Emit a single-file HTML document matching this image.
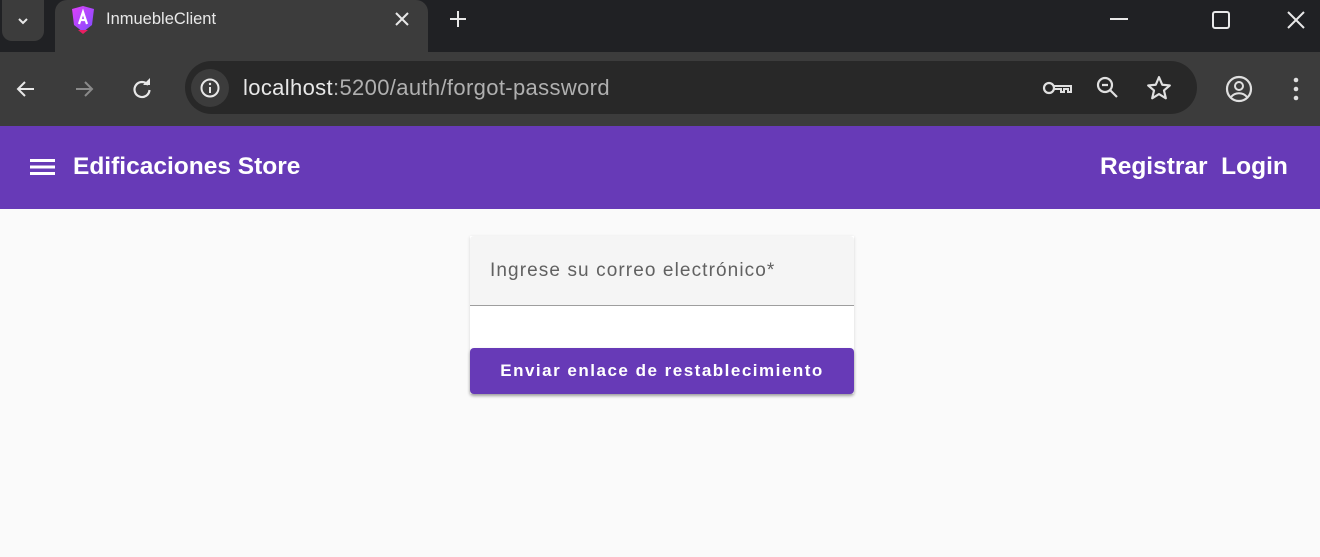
<!DOCTYPE html>
<html><head><meta charset="utf-8"><style>
*{margin:0;padding:0;box-sizing:border-box}
body{width:1320px;height:557px;background:#fafafa;font-family:"Liberation Sans",sans-serif;position:relative;overflow:hidden}
.abs{position:absolute}
svg{position:absolute}
</style></head><body>
<div class="abs" style="left:0;top:0;width:1320px;height:52px;background:#202124"></div>
<div class="abs" style="left:2px;top:0;width:42px;height:41px;background:#3c3c3c;border-radius:0 0 10px 10px"></div>
<svg style="left:14px;top:12px" width="18" height="18" viewBox="0 0 18 18"><path d="M5 7l4 4 4-4" stroke="#e8e8e8" stroke-width="2" fill="none"/></svg>
<div class="abs" style="left:55px;top:0;width:373px;height:52px;background:#3c3c3c;border-radius:12px 12px 0 0"></div>
<svg style="left:70px;top:6px" width="26" height="28" viewBox="0 0 26 28"><defs><linearGradient id="g" x1="0" y1="0" x2="1" y2="1"><stop offset="0" stop-color="#e040fb"/><stop offset="1" stop-color="#7c4dff"/></linearGradient></defs><path d="M2 3L13 0l11 3-2 16-9 7-9-7z" fill="url(#g)"/><path d="M9 18l4-12 4 12M10.5 14h5" stroke="#fff" stroke-width="2.2" fill="none"/><path d="M8 24h10l-5 4z" fill="#e91e63"/></svg>
<div class="abs" style="left:106px;top:10px;color:#e8e8e8;font-size:16.5px">InmuebleClient</div>
<svg style="left:394px;top:11px" width="16" height="16" viewBox="0 0 16 16"><path d="M2 2l12 12M14 2L2 14" stroke="#e8e8e8" stroke-width="2"/></svg>
<svg style="left:449px;top:10px" width="18" height="18" viewBox="0 0 18 18"><path d="M9 1v16M1 9h16" stroke="#e8e8e8" stroke-width="2"/></svg>
<svg style="left:1110px;top:18px" width="20" height="4"><rect width="18" height="2" fill="#e8e8e8"/></svg>
<svg style="left:1212px;top:11px" width="18" height="18"><rect x="1" y="1" width="16" height="16" rx="2" stroke="#e8e8e8" stroke-width="2" fill="none"/></svg>
<svg style="left:1286px;top:10px" width="20" height="20"><path d="M2 2l16 16M18 2L2 18" stroke="#e8e8e8" stroke-width="2"/></svg>
<div class="abs" style="left:0;top:52px;width:1320px;height:74px;background:#3c3c3c"></div>
<svg style="left:14px;top:78px" width="24" height="22" viewBox="0 0 24 22"><path d="M20 11H5M11 4l-7 7 7 7" stroke="#e8e8e8" stroke-width="2" fill="none"/></svg>
<svg style="left:72px;top:78px" width="24" height="22" viewBox="0 0 24 22"><path d="M4 11h15M13 4l7 7-7 7" stroke="#8a8a8a" stroke-width="2" fill="none"/></svg>
<svg style="left:131px;top:78px" width="22" height="22" viewBox="0 0 22 22"><path d="M17 7A7.5 7.5 0 1 0 18.5 12" stroke="#e8e8e8" stroke-width="2.2" fill="none"/><path d="M12 7h7V0z" fill="#e8e8e8"/></svg>
<div class="abs" style="left:185px;top:61px;width:1012px;height:53px;background:#282828;border-radius:27px"></div>
<div class="abs" style="left:191px;top:69px;width:38px;height:38px;background:#3c3c3c;border-radius:19px"></div>
<svg style="left:200px;top:78px" width="20" height="20" viewBox="0 0 20 20"><circle cx="10" cy="10" r="8.5" stroke="#e8e8e8" stroke-width="2" fill="none"/><path d="M10 9v6" stroke="#e8e8e8" stroke-width="2"/><circle cx="10" cy="6" r="1.2" fill="#e8e8e8"/></svg>
<div class="abs" style="left:243px;top:75px;font-size:22px;letter-spacing:0.35px;color:#e8e8e8">localhost<span style="color:#b0b0b0">:5200/auth/forgot-password</span></div>
<svg style="left:1042px;top:78px" width="32" height="20" viewBox="0 0 32 20"><circle cx="7" cy="10" r="5" stroke="#e0e0e0" stroke-width="2.2" fill="none"/><path d="M12 8h17v6h-3v-3h-4v3h-3v-3h-7" stroke="#e0e0e0" stroke-width="2" fill="none"/></svg>
<svg style="left:1095px;top:75px" width="26" height="26" viewBox="0 0 26 26"><circle cx="10" cy="10" r="7" stroke="#e0e0e0" stroke-width="2.2" fill="none"/><path d="M15 15l7 7M7 10h6" stroke="#e0e0e0" stroke-width="2.2"/></svg>
<svg style="left:1146px;top:75px" width="26" height="26" viewBox="0 0 24 24"><path d="M12 2l3 7 7 .6-5.4 4.7 1.7 7.2L12 17.6 5.7 21.5l1.7-7.2L2 9.6 9 9z" stroke="#e0e0e0" stroke-width="2" fill="none" stroke-linejoin="round"/></svg>
<svg style="left:1225px;top:75px" width="28" height="28" viewBox="0 0 28 28"><circle cx="14" cy="14" r="12" stroke="#e0e0e0" stroke-width="2.2" fill="none"/><circle cx="14" cy="11" r="4" stroke="#e0e0e0" stroke-width="2" fill="none"/><path d="M6 22c4-5 12-5 16 0" stroke="#e0e0e0" stroke-width="2" fill="none"/></svg>
<svg style="left:1290px;top:76px" width="12" height="26"><circle cx="6" cy="4" r="2.3" fill="#e0e0e0"/><circle cx="6" cy="13" r="2.3" fill="#e0e0e0"/><circle cx="6" cy="22" r="2.3" fill="#e0e0e0"/></svg>
<div class="abs" style="left:0;top:126px;width:1320px;height:83px;background:#673ab7"></div>
<svg style="left:30px;top:158px" width="26" height="18"><rect y="1" width="25" height="3" fill="#fff"/><rect y="7.5" width="25" height="3" fill="#fff"/><rect y="14" width="25" height="3" fill="#fff"/></svg>
<div class="abs" style="left:73px;top:153px;color:#fff;font-size:24.5px;font-weight:bold;letter-spacing:0px">Edificaciones Store</div>
<div class="abs" style="left:1100px;top:153px;color:#fff;font-size:24.5px;font-weight:bold;letter-spacing:0px">Registrar&nbsp; Login</div>
<div class="abs" style="left:470px;top:236px;width:384px;height:158px;background:#fff;box-shadow:0 1px 3px rgba(0,0,0,.15)"></div>
<div class="abs" style="left:470px;top:236px;width:384px;height:70px;background:#f5f5f5;border-bottom:1px solid #9e9e9e;border-radius:4px 4px 0 0"></div>
<div class="abs" style="left:490px;top:260px;color:#616161;font-size:19px;letter-spacing:1.1px">Ingrese su correo electrónico*</div>
<div class="abs" style="left:470px;top:348px;width:384px;height:46px;background:#673ab7;border-radius:4px;box-shadow:0 2px 3px rgba(0,0,0,.3);color:#fff;font-weight:bold;font-size:17px;letter-spacing:1.5px;text-align:center;line-height:45px">Enviar enlace de restablecimiento</div>
</body></html>
